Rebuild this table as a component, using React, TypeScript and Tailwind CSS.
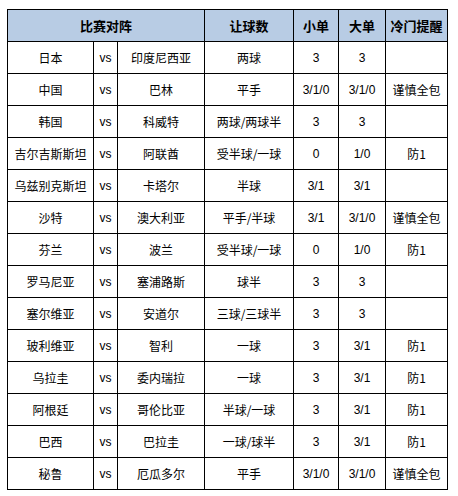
import React from "react";

const rows: [string, string, string, string, string, string][] = [
  ["日本", "印度尼西亚", "两球", "3", "3", ""],
  ["中国", "巴林", "平手", "3/1/0", "3/1/0", "谨慎全包"],
  ["韩国", "科威特", "两球/两球半", "3", "3", ""],
  ["吉尔吉斯斯坦", "阿联酋", "受半球/一球", "0", "1/0", "防1"],
  ["乌兹别克斯坦", "卡塔尔", "半球", "3/1", "3/1", ""],
  ["沙特", "澳大利亚", "平手/半球", "3/1", "3/1/0", "谨慎全包"],
  ["芬兰", "波兰", "受半球/一球", "0", "1/0", "防1"],
  ["罗马尼亚", "塞浦路斯", "球半", "3", "3", ""],
  ["塞尔维亚", "安道尔", "三球/三球半", "3", "3", ""],
  ["玻利维亚", "智利", "一球", "3", "3/1", "防1"],
  ["乌拉圭", "委内瑞拉", "一球", "3", "3/1", "防1"],
  ["阿根廷", "哥伦比亚", "半球/一球", "3", "3/1", "防1"],
  ["巴西", "巴拉圭", "一球/球半", "3", "3/1", "防1"],
  ["秘鲁", "厄瓜多尔", "平手", "3/1/0", "3/1/0", "谨慎全包"],
];

const font = { fontFamily: '"SimSun", "Noto Sans CJK SC", "Liberation Sans", sans-serif' };
const num = { fontFamily: '"Liberation Sans", sans-serif', fontSize: 12 };

export default function App() {
  const td = "border border-black text-center align-middle h-[32px] p-0 text-[12px] text-black";
  const th = "border border-black text-center align-middle h-[32px] p-0 text-[13px] font-bold text-black bg-[#b8cce4]";
  return (
    <div className="w-[458px] h-[496px] bg-white pl-[7px] pt-[9px]" style={font}>
      <table className="border-collapse table-fixed w-[440px]">
        <colgroup>
          <col className="w-[86px]" />
          <col className="w-[24px]" />
          <col className="w-[87px]" />
          <col className="w-[89px]" />
          <col className="w-[45px]" />
          <col className="w-[47px]" />
          <col className="w-[62px]" />
        </colgroup>
        <thead>
          <tr>
            <th colSpan={3} className={th}>比赛对阵</th>
            <th className={th}>让球数</th>
            <th className={th}>小单</th>
            <th className={th}>大单</th>
            <th className={th}>冷门提醒</th>
          </tr>
        </thead>
        <tbody>
          {rows.map((r, i) => (
            <tr key={i}>
              <td className={td}>{r[0]}</td>
              <td className={td + " text-[11px]"} style={{ fontFamily: '"Liberation Sans", sans-serif' }}>vs</td>
              <td className={td}>{r[1]}</td>
              <td className={td}>{r[2]}</td>
              <td className={td} style={num}>{r[3]}</td>
              <td className={td} style={num}>{r[4]}</td>
              <td className={td}>{r[5]}</td>
            </tr>
          ))}
        </tbody>
      </table>
    </div>
  );
}
